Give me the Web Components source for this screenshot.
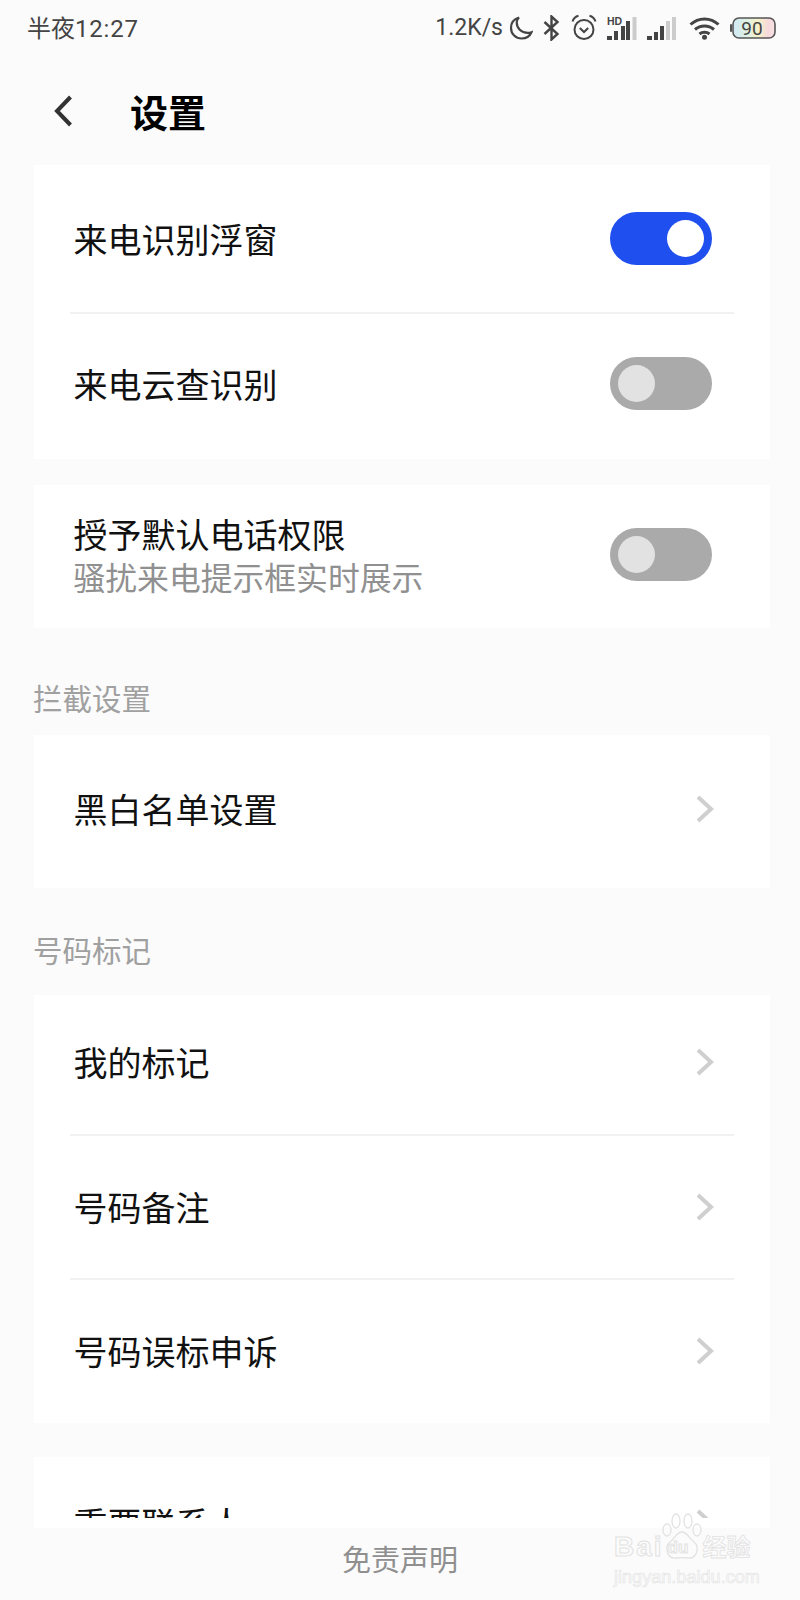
<!DOCTYPE html>
<html lang="zh">
<head>
<meta charset="utf-8">
<title>设置</title>
<style>
  html, body { margin: 0; padding: 0; background: #fbfbfb; }
  body { font-family: Roboto, "Noto Sans CJK SC", sans-serif; }
</style>
</head>
<body>
<settings-page>
  <status-bar slot="top"></status-bar>
  <page-header slot="top">设置</page-header>

  <settings-card>
    <settings-row height="147">来电识别浮窗<ui-toggle slot="end" on></ui-toggle></settings-row>
    <card-line></card-line>
    <settings-row height="145" style="--lift:6px">来电云查识别<ui-toggle slot="end"></ui-toggle></settings-row>
  </settings-card>

  <settings-card style="margin-top:26px">
    <settings-row height="143" style="--lift:4px" sub="骚扰来电提示框实时展示">授予默认电话权限<ui-toggle slot="end"></ui-toggle></settings-row>
  </settings-card>

  <section-label height="107" shift="69">拦截设置</section-label>
  <settings-card>
    <settings-row height="153" style="--lift:5px">黑白名单设置<row-chevron slot="end"></row-chevron></settings-row>
  </settings-card>

  <section-label height="107" shift="61">号码标记</section-label>
  <settings-card>
    <settings-row height="139" style="--lift:6px">我的标记<row-chevron slot="end"></row-chevron></settings-row>
    <card-line></card-line>
    <settings-row height="142">号码备注<row-chevron slot="end"></row-chevron></settings-row>
    <card-line></card-line>
    <settings-row height="143" style="--lift:2px">号码误标申诉<row-chevron slot="end"></row-chevron></settings-row>
  </settings-card>

  <clipped-card>
    <settings-row height="131">重要联系人<row-chevron slot="end"></row-chevron></settings-row>
  </clipped-card>

  <page-footer slot="bottom">免责声明</page-footer>
  <baidu-mark slot="bottom"></baidu-mark>
</settings-page>

<script>
const CJK = '"Noto Sans CJK SC", sans-serif';

class SettingsPage extends HTMLElement {
    constructor() {
        super();
        this.attachShadow({ mode: "open" }).innerHTML = `
        <style>
        :host { display: flex; flex-direction: column; position: relative; width: 800px; height: 1600px; overflow: hidden; background: #fbfbfb; }
        .scroll { height: 1363px; overflow: hidden; padding: 0 30px 0 34px; flex: none; }
        </style>
        <slot name="top"></slot>
        <div class="scroll"><slot></slot></div>
        <slot name="bottom"></slot>`;
    }
}

class StatusBar extends HTMLElement {
    constructor() {
        super();
        this.attachShadow({ mode: "open" }).innerHTML = `
        <style>
        :host { display: flex; align-items: center; height: 56px; padding: 0 24px 0 27px; color: #444; font: 24px Roboto, ${CJK}; }
        .time { flex: 1; padding-bottom: 3px; }
        .time b { font-weight: 400; letter-spacing: .8px; }
        .speed { font-size: 23px; padding-bottom: 1px; }
        svg { display: block; flex: none; }
        .moon { margin-left: 6px; } .bt { margin-left: 10px; } .alarm { margin-left: 11px; }
        .hd { margin-left: 10px; } .sig { margin-left: 10px; } .wifi { margin-left: 12px; } .bat { margin-left: 10px; }
        </style>
        <span class="time">半夜<b>12:27</b></span>
        <span class="speed">1.2K/s</span>
        <svg class="moon" width="24" height="26" viewBox="0 0 23 26" fill="none" stroke="#444" stroke-width="2.2"><path d="M9.5 2.5C4.5 4 1.5 8.2 1.5 13c0 6 4.800 10.500 10.500 10.500 4.500 0 8.300-2.500 10-6.300-1.200.4-2.500.6-3.800.6-6.500 0-11-4.800-11-10.500 0-1.700.7-3.300 2.300-4.800z"/></svg>
        <svg class="bt" width="17" height="26" viewBox="0 0 17 26" fill="none" stroke="#444" stroke-width="2.400"><path d="M1.500 7l13 12-6 5.500V1.500l6 5.500-13 12"/></svg>
        <svg class="alarm" width="26" height="28" viewBox="0 0 26 28" fill="none" stroke="#444" stroke-width="2"><circle cx="13" cy="15.500" r="9.500"/><path d="M1.500 7.500C2.500 4.500 4.500 2.500 7.500 1.800M24.500 7.500C23.500 4.500 21.500 2.500 18.500 1.800M8.800 14l4.200 4 4.200-4"/></svg>
        <svg class="hd" width="30" height="26" viewBox="0 0 30 26"><text x="0" y="9.500" font-family="Liberation Sans, sans-serif" font-size="10.500" font-weight="700" fill="#444">HD</text>
          <rect x="0" y="21" width="5" height="4" fill="#444"/><rect x="7" y="16" width="4" height="9" fill="#444"/><rect x="14" y="11" width="4" height="14" fill="#444"/><rect x="19" y="6" width="4" height="19" fill="#444"/><rect x="25.500" y="2" width="4" height="23" fill="#ccc"/></svg>
        <svg class="sig" width="30" height="26" viewBox="0 0 30 26"><rect x="0" y="21" width="5" height="4" fill="#444"/><rect x="7" y="17" width="4" height="8" fill="#444"/><rect x="13" y="11" width="4" height="14" fill="#444"/><rect x="19" y="6" width="4" height="19" fill="#ccc"/><rect x="25" y="2" width="4" height="23" fill="#ccc"/></svg>
        <svg class="wifi" width="31" height="24" viewBox="0 0 31 24" fill="none" stroke="#444" stroke-width="3"><path d="M1.500 8.500C9.500 1 21.500 1 29.500 8.500M6 13.500c5.500-4.800 13.500-4.800 19 0M10.500 18c2.800-2.300 7.200-2.300 10 0"/><circle cx="15.500" cy="21.300" r="2.500" fill="#444" stroke="none"/></svg>
        <svg class="bat" width="46" height="22" viewBox="0 0 46 22">
          <defs><linearGradient id="g"><stop offset="0" stop-color="#d0eaf6"/><stop offset=".3" stop-color="#dcf0e6"/><stop offset=".6" stop-color="#f6f2c8"/><stop offset=".85" stop-color="#f6d8dc"/><stop offset="1" stop-color="#f8e4e4"/></linearGradient></defs>
          <rect x="0" y="7" width="2" height="8" rx="1" fill="#555"/>
          <rect x="3" y="1" width="42" height="20" rx="6" fill="url(#g)" stroke="#555" stroke-width="1.600"/>
          <text x="22" y="17.500" text-anchor="middle" font-family="Roboto, sans-serif" font-size="19" fill="#444">90</text>
        </svg>`;
    }
}

class PageHeader extends HTMLElement {
    constructor() {
        super();
        this.attachShadow({ mode: "open" }).innerHTML = `
        <style>
        :host { display: flex; align-items: center; height: 109px; padding-left: 54px; box-sizing: border-box; }
        svg { display: block; flex: none; }
        .title { margin-left: 58px; font: 700 38px/1 ${CJK}; color: #000; }
        </style>
        <svg width="18" height="32" viewBox="0 0 18 32" fill="none" stroke="#333" stroke-width="4"><path d="M16.500 2L3 16l13.500 14"/></svg>
        <span class="title"><slot></slot></span>`;
    }
}

class SettingsCard extends HTMLElement {
    constructor() {
        super();
        this.attachShadow({ mode: "open" }).innerHTML = `
        <style>:host { display: block; background: #fff; }</style><slot></slot>`;
    }
}

class ClippedCard extends HTMLElement {
    constructor() {
        super();
        // the list runs under the footer: content stops a little above the card's edge
        this.attachShadow({ mode: "open" }).innerHTML = `
        <style>
        :host { display: block; background: #fff; margin-top: 34px; height: 71px; }
        .inner { height: 61px; overflow: hidden; }
        </style><div class="inner"><slot></slot></div>`;
    }
}

class SettingsRow extends HTMLElement {
    constructor() {
        super();
        this.attachShadow({ mode: "open" }).innerHTML = `
        <style>
        :host { display: flex; align-items: center; justify-content: space-between; box-sizing: border-box; padding: 0 58px var(--lift, 0) 39.500px; height: var(--h); }
        .title { font: 400 34px/42px ${CJK}; color: #111; }
        .sub { font: 400 31.800px/42px ${CJK}; color: #909090; }
        .sub:empty { display: none; }
        </style>
        <div><div class="title"><slot></slot></div><div class="sub"></div></div>
        <slot name="end"></slot>`;
    }
    connectedCallback() {
        this.style.setProperty('--h', this.getAttribute('height') + 'px');
        this.shadowRoot.querySelector('.sub').textContent = this.getAttribute('sub') || '';
    }
}

class CardLine extends HTMLElement {
    constructor() {
        super();
        this.attachShadow({ mode: "open" }).innerHTML = `
        <style>:host { display: block; height: 2px; margin: 0 36px; background: #f0f1f1; }</style>`;
    }
}

class UiToggle extends HTMLElement {
    constructor() {
        super();
        this.attachShadow({ mode: "open" }).innerHTML = `
        <style>
        :host { display: flex; align-items: center; box-sizing: border-box; width: 102px; height: 53px; padding: 0 8px; border-radius: 27px; background: #aaaaaa; flex: none; }
        :host([on]) { background: #1f4fee; justify-content: flex-end; }
        i { display: block; width: 37px; height: 37px; border-radius: 50%; background: #e2e2e2; }
        :host([on]) i { background: #fff; }
        </style><i></i>`;
    }
}

class RowChevron extends HTMLElement {
    constructor() {
        super();
        this.attachShadow({ mode: "open" }).innerHTML = `
        <style>:host { display: block; width: 18px; height: 28px; margin-right: -2px; } svg { display: block; }</style>
        <svg width="18" height="28" viewBox="0 0 18 28" fill="none" stroke="#cfcfcf" stroke-width="4"><path d="M2 2l13 12L2 26"/></svg>`;
    }
}

class SectionLabel extends HTMLElement {
    constructor() {
        super();
        this.attachShadow({ mode: "open" }).innerHTML = `
        <style>
        :host { display: block; height: var(--h); margin-left: -1px; color: #a0a0a0; font: 400 29.500px/40px ${CJK}; }
        div { padding-top: var(--t); }
        </style><div><slot></slot></div>`;
    }
    connectedCallback() {
        this.style.setProperty('--h', this.getAttribute('height') + 'px');
        this.style.setProperty('--t', (this.getAttribute('shift') - 20) + 'px');
    }
}

class PageFooter extends HTMLElement {
    constructor() {
        super();
        this.attachShadow({ mode: "open" }).innerHTML = `
        <style>
        :host { display: block; height: 72px; text-align: center; color: #8f8f8f; font: 400 29px/60px ${CJK}; }
        </style><slot></slot>`;
    }
}

class BaiduMark extends HTMLElement {
    constructor() {
        super();
        this.attachShadow({ mode: "open" }).innerHTML = `
        <style>
        :host { position: absolute; left: 614px; top: 1513px; width: 144px; color: transparent; -webkit-text-stroke: 1px #e2e2e2; font-family: "Liberation Sans", sans-serif; }
        .top { display: flex; align-items: flex-end; height: 47px; }
        .b { font: 700 28px/26px "Liberation Sans", sans-serif; letter-spacing: 2px; }
        .paw { position: relative; width: 42px; height: 47px; margin-left: -3px; flex: none; }
        .paw svg { display: block; }
        .du { position: absolute; left: 7px; top: 26px; font: 700 17px/18px "Liberation Sans", sans-serif; }
        .j { font: 700 24px/28px ${CJK}; -webkit-text-stroke: .8px #e2e2e2; }
        .url { font: 400 18.100px/22px "Liberation Sans", sans-serif; margin-top: 6px; white-space: nowrap; -webkit-text-stroke: .7px #e6e6e6; }
        </style>
        <div class="top">
          <span class="b">Bai</span>
          <span class="paw">
            <svg width="42" height="47" viewBox="0 0 42 47" fill="none" stroke="#e2e2e2" stroke-width="1.300">
              <ellipse cx="6" cy="17" rx="4" ry="6"/><ellipse cx="15" cy="8" rx="4" ry="7"/><ellipse cx="27" cy="8" rx="4" ry="7"/><ellipse cx="36" cy="17" rx="4" ry="6"/>
              <path d="M21 19c-5 0-7 6-12 10-6 5-3 17 6 16 4-.5 8-.5 12 0 9 1 12-11 6-16-5-4-7-10-12-10z"/>
            </svg>
            <span class="du">du</span>
          </span>
          <span class="j">经验</span>
        </div>
        <div class="url">jingyan.baidu.com</div>`;
    }
}

customElements.define('settings-page', SettingsPage);
customElements.define('status-bar', StatusBar);
customElements.define('page-header', PageHeader);
customElements.define('settings-card', SettingsCard);
customElements.define('clipped-card', ClippedCard);
customElements.define('settings-row', SettingsRow);
customElements.define('card-line', CardLine);
customElements.define('ui-toggle', UiToggle);
customElements.define('row-chevron', RowChevron);
customElements.define('section-label', SectionLabel);
customElements.define('page-footer', PageFooter);
customElements.define('baidu-mark', BaiduMark);
</script>
</body>
</html>
